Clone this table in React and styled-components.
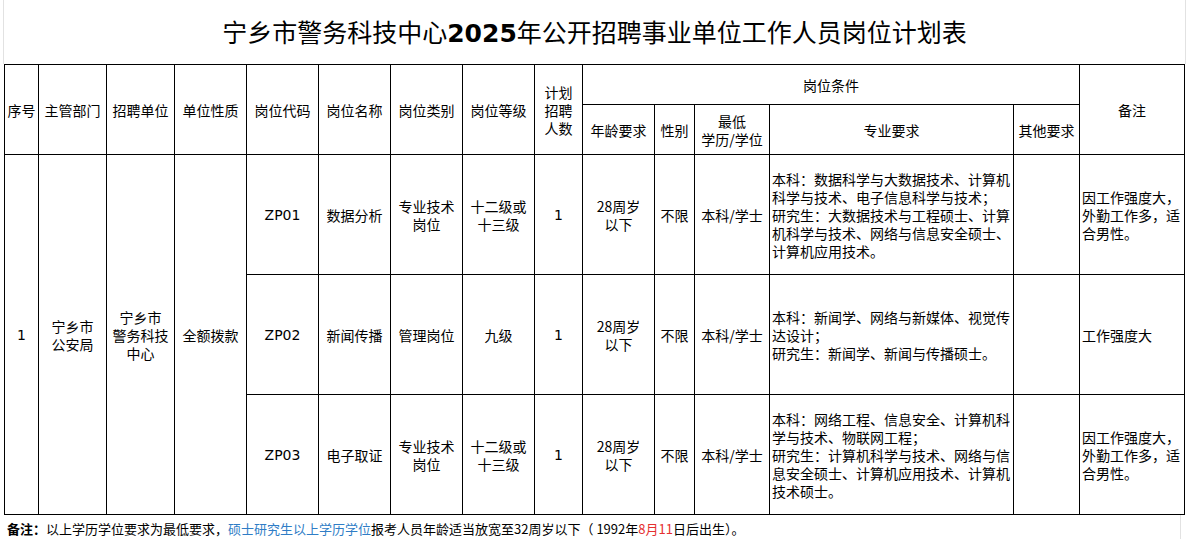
import React from "react";
import styled, { createGlobalStyle } from "styled-components";

const GlobalStyle = createGlobalStyle`
  html, body {
    margin: 0;
    padding: 0;
    background: #fff;
  }
  body {
    font-family: "DejaVu Sans", "Noto Sans CJK SC", sans-serif;
    color: #000;
  }
`;

const COLS = [34, 68, 68, 72, 72, 72, 72, 72, 48, 72, 40, 75, 244, 66, 105];

const POSTS = [
  {
    code: "ZP01",
    name: "数据分析",
    kind: ["专业技术", "岗位"],
    level: ["十二级或", "十三级"],
    count: "1",
    spec: [
      "本科：数据科学与大数据技术、计算机",
      "科学与技术、电子信息科学与技术；",
      "研究生：大数据技术与工程硕士、计算",
      "机科学与技术、网络与信息安全硕士、",
      "计算机应用技术。"
    ],
    remark: ["因工作强度大，", "外勤工作多，适", "合男性。"]
  },
  {
    code: "ZP02",
    name: "新闻传播",
    kind: ["管理岗位"],
    level: ["九级"],
    count: "1",
    spec: [
      "本科：新闻学、网络与新媒体、视觉传",
      "达设计；",
      "研究生：新闻学、新闻与传播硕士。"
    ],
    remark: ["工作强度大"]
  },
  {
    code: "ZP03",
    name: "电子取证",
    kind: ["专业技术", "岗位"],
    level: ["十二级或", "十三级"],
    count: "1",
    spec: [
      "本科：网络工程、信息安全、计算机科",
      "学与技术、物联网工程；",
      "研究生：计算机科学与技术、网络与信",
      "息安全硕士、计算机应用技术、计算机",
      "技术硕士。"
    ],
    remark: ["因工作强度大，", "外勤工作多，适", "合男性。"]
  }
];

export default function App() {
  return (
    <Page>
      <GlobalStyle />
      <TitleBar>
        <Title>
          宁乡市警务科技中心<Digits>2025</Digits>年公开招聘事业单位工作人员岗位计划表
        </Title>
      </TitleBar>
      <Sheet>
        <colgroup>
          {COLS.map((w, i) => (
            <col key={i} style={{ width: w }} />
          ))}
        </colgroup>
        <thead>
          <Row $h={40}>
            <Cell rowSpan={2}>序号</Cell>
            <Cell rowSpan={2}>主管部门</Cell>
            <Cell rowSpan={2}>招聘单位</Cell>
            <Cell rowSpan={2}>单位性质</Cell>
            <Cell rowSpan={2}>岗位代码</Cell>
            <Cell rowSpan={2}>岗位名称</Cell>
            <Cell rowSpan={2}>岗位类别</Cell>
            <Cell rowSpan={2}>岗位等级</Cell>
            <Cell rowSpan={2}>
              <Lines lines={["计划", "招聘", "人数"]} />
            </Cell>
            <Cell colSpan={5}>岗位条件</Cell>
            <Cell rowSpan={2}>备注</Cell>
          </Row>
          <Row $h={50}>
            <Cell>年龄要求</Cell>
            <Cell>性别</Cell>
            <Cell>
              <Lines lines={["最低", "学历/学位"]} />
            </Cell>
            <Cell>专业要求</Cell>
            <Cell>其他要求</Cell>
          </Row>
        </thead>
        <tbody>
          {POSTS.map((p, i) => (
            <Row key={p.code} $h={120}>
              {i === 0 && (
                <>
                  <Cell rowSpan={3} $latin>1</Cell>
                  <Cell rowSpan={3}>
                    <Lines lines={["宁乡市", "公安局"]} />
                  </Cell>
                  <Cell rowSpan={3}>
                    <Lines lines={["宁乡市", "警务科技", "中心"]} />
                  </Cell>
                  <Cell rowSpan={3}>全额拨款</Cell>
                </>
              )}
              <Cell $latin>{p.code}</Cell>
              <Cell>{p.name}</Cell>
              <Cell>
                <Lines lines={p.kind} />
              </Cell>
              <Cell>
                <Lines lines={p.level} />
              </Cell>
              <Cell $latin>{p.count}</Cell>
              <Cell>
                <Lines lines={["28周岁", "以下"]} />
              </Cell>
              <Cell>不限</Cell>
              <Cell>本科/学士</Cell>
              <Cell $align="left">
                <Lines lines={p.spec} />
              </Cell>
              <Cell />
              <Cell $align="left">
                <Lines lines={p.remark} />
              </Cell>
            </Row>
          ))}
        </tbody>
      </Sheet>
      <Footer>
        <Note>
          <b>备注：</b>以上学历学位要求为最低要求，
          <Blue>硕士研究生以上学历学位</Blue>报考人员年龄适当放宽至32周岁以下（ 1992年
          <Red>8月11</Red>日后出生）。
        </Note>
      </Footer>
    </Page>
  );
}

function Lines({ lines }) {
  return (
    <>
      {lines.map((l, i) => (
        <Line key={i}>{l}</Line>
      ))}
    </>
  );
}

const Page = styled.div`
  width: 1189px;
  height: 539px;
  overflow: hidden;
`;

const TitleBar = styled.div`
  margin-left: 3px;
  width: 1181px;
  height: 64px;
  border-left: 1px solid #e2e2e2;
  border-right: 1px solid #e2e2e2;
  display: flex;
  align-items: center;
  justify-content: center;
`;

const Title = styled.h1`
  margin: 0;
  font-family: "Noto Sans CJK SC", "DejaVu Sans", sans-serif;
  font-size: 25px;
  font-weight: normal;
  line-height: 30px;
`;

const Digits = styled.span`
  font-family: "DejaVu Sans", sans-serif;
  font-weight: bold;
`;

const Sheet = styled.table`
  margin-left: 4px;
  width: 1181px;
  border-collapse: collapse;
  table-layout: fixed;
`;

const Row = styled.tr`
  height: ${(p) => p.$h}px;
`;

const Cell = styled.td`
  border: 1px solid #000;
  padding: 0 2px;
  text-align: ${(p) => p.$align || "center"};
  vertical-align: middle;
  font-family: ${(p) =>
    p.$latin
      ? `"DejaVu Sans", "Noto Sans CJK SC", sans-serif`
      : `"Noto Sans CJK SC", "DejaVu Sans", sans-serif`};
  font-size: 14px;
  line-height: 18px;
  white-space: nowrap;
  overflow: hidden;
`;

const Line = styled.div`
  white-space: nowrap;
`;

const Footer = styled.div`
  width: 1181px;
  height: 25px;
  border-right: 1px solid #e2e2e2;
  padding: 6px 0 0 7px;
  box-sizing: border-box;
`;

const Note = styled.p`
  margin: 0;
  font-family: "Noto Sans CJK SC", "Liberation Serif", serif;
  font-size: 13px;
  line-height: 16px;
  white-space: nowrap;
`;

const Blue = styled.span`
  color: #2f7dc6;
`;

const Red = styled.span`
  color: #e53030;
`;
